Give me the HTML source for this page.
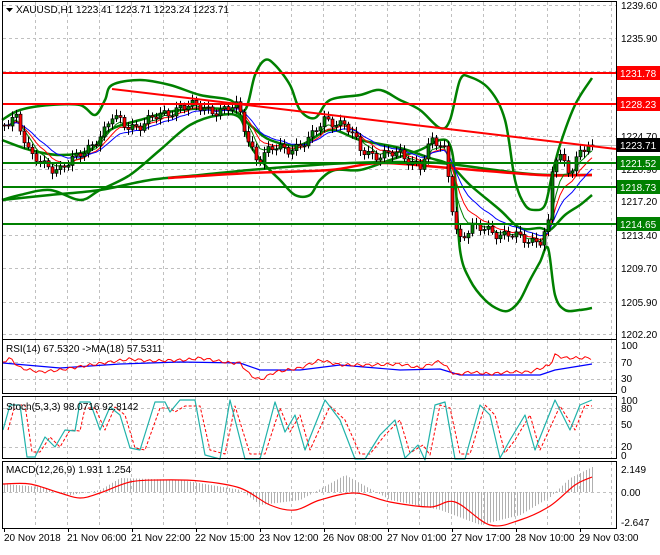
<!DOCTYPE html>
<html><head><meta charset="utf-8"><style>
html,body{margin:0;padding:0;background:#fff;}
body{width:660px;height:550px;overflow:hidden;font-family:"Liberation Sans",sans-serif;}
svg text{font-family:"Liberation Sans",sans-serif;font-size:10px;}
</style></head><body>
<svg id="s" width="660" height="550" xmlns="http://www.w3.org/2000/svg">
<rect width="660" height="550" fill="#fff"/>
<g id="grid" stroke="#c0c0c0" stroke-dasharray="3,3" stroke-width="1"></g>
<g id="ind"></g>
<g id="cand"></g>
<g id="top"></g>
<g fill="none" stroke="#000" stroke-width="1">
<rect x="2.5" y="1.5" width="614" height="338"/>
<rect x="2.5" y="339.5" width="614" height="54"/>
<rect x="2.5" y="396.5" width="614" height="62"/>
<rect x="2.5" y="461.5" width="614" height="67"/>
</g>
<g fill="#000">
<path d="M6 8 L13 8 L9.5 12 Z"/>
<text x="16" y="13">XAUUSD,H1  1223.41 1223.71 1223.24 1223.71</text>
<text x="6" y="352">RSI(14) 67.5320  -&gt;MA(18) 57.5311</text>
<text x="6" y="410">Stoch(5,3,3) 98.0716 92.8142</text>
<text x="6" y="473">MACD(12,26,9) 1.931 1.254</text>
</g>
<g fill="#000" id="axis">
<text x="621" y="9">1239.60</text>
<text x="621" y="42">1235.90</text>
<text x="621" y="140">1224.70</text>
<text x="621" y="173">1220.90</text>
<text x="621" y="205">1217.20</text>
<text x="621" y="239">1213.40</text>
<text x="621" y="272">1209.70</text>
<text x="621" y="306">1205.90</text>
<text x="621" y="338">1202.20</text>
<text x="621" y="349">100</text><text x="621" y="366">70</text><text x="621" y="382">30</text><text x="621" y="393">0</text>
<text x="621" y="404">100</text><text x="621" y="412">80</text><text x="621" y="428">50</text><text x="621" y="450">20</text><text x="621" y="459">0</text>
<text x="621" y="473">2.149</text><text x="621" y="496">0.00</text><text x="621" y="526">-2.647</text>
</g>
<g fill="#000" id="time">
<text x="4" y="541">20 Nov 2018</text>
<text x="67" y="541">21 Nov 06:00</text>
<text x="131" y="541">21 Nov 22:00</text>
<text x="195" y="541">22 Nov 15:00</text>
<text x="259" y="541">23 Nov 12:00</text>
<text x="323" y="541">26 Nov 08:00</text>
<text x="387" y="541">27 Nov 01:00</text>
<text x="451" y="541">27 Nov 17:00</text>
<text x="515" y="541">28 Nov 10:00</text>
<text x="579" y="541">29 Nov 03:00</text>
</g>
<g id="lbl"></g>
</svg>
<script>
var NS="http://www.w3.org/2000/svg";
function el(p,t,a){var e=document.createElementNS(NS,t);for(var k in a)e.setAttribute(k,a[k]);document.getElementById(p).appendChild(e);return e;}
function interp(pts,x){if(x<=pts[0][0])return pts[0][1];for(var i=1;i<pts.length;i++){if(x<=pts[i][0]){var a=pts[i-1],b=pts[i];return a[1]+(b[1]-a[1])*(x-a[0])/(b[0]-a[0]);}}return pts[pts.length-1][1];}
function pl(p,pts,c,w,d){var s=pts.map(function(q){return q[0]+","+q[1]}).join(" ");var a={points:s,fill:"none",stroke:c,"stroke-width":w,"stroke-linejoin":"round"};if(d)a["stroke-dasharray"]=d;el(p,"polyline",a);}
function cr(p,pts,c,w){var d="M"+pts[0][0]+","+pts[0][1];for(var i=0;i<pts.length-1;i++){var p0=pts[Math.max(0,i-1)],p1=pts[i],p2=pts[i+1],p3=pts[Math.min(pts.length-1,i+2)];
var c1x=p1[0]+(p2[0]-p0[0])/6,c1y=p1[1]+(p2[1]-p0[1])/6,c2x=p2[0]-(p3[0]-p1[0])/6,c2y=p2[1]-(p3[1]-p1[1])/6;
d+=" C"+c1x.toFixed(1)+","+c1y.toFixed(1)+" "+c2x.toFixed(1)+","+c2y.toFixed(1)+" "+p2[0]+","+p2[1];}
el(p,"path",{d:d,fill:"none",stroke:c,"stroke-width":w,"stroke-linejoin":"round"});}
function smooth(pts,step){var o=[];for(var x=pts[0][0];x<=pts[pts.length-1][0];x+=step)o.push([x,interp(pts,x)]);return o;}
var hy=[5,38,71,104,136,169,201,235,268,302,334];
hy.forEach(function(y){el("grid","line",{x1:3,x2:616,y1:y+.5,y2:y+.5});});
[362,379].forEach(function(y){el("grid","line",{x1:3,x2:616,y1:y+.5,y2:y+.5});});
[408,424,447].forEach(function(y){el("grid","line",{x1:3,x2:616,y1:y+.5,y2:y+.5});});
el("grid","line",{x1:3,x2:616,y1:492.5,y2:492.5});
for(var x=35;x<616;x+=32){[[2,339],[340,393],[397,458],[462,528]].forEach(function(r){el("grid","line",{x1:x+.5,x2:x+.5,y1:r[0],y2:r[1]});});}
el("grid","line",{x1:3,x2:616,y1:145.5,y2:145.5,stroke:"#c0c0c0","stroke-dasharray":"none"});
var P=[[4,125],[15,112],[30,158],[45,165],[60,168],[75,160],[90,145],[105,130],[112,118],[125,125],[140,125],[160,116],[180,106],[200,108],[220,110],[238,108],[248,140],[258,160],[270,150],[290,148],[310,140],[325,118],[345,125],[360,150],[380,155],[400,155],[420,165],[432,142],[445,150],[452,205],[458,240],[475,228],[490,228],[500,235],[520,238],[540,240],[548,226],[553,160],[560,158],[570,170],[580,150],[592,145]];
var closes=[],prev=125;
for(var i=0,x=4;x<=592;x+=4,i++){
 var c=interp(P,x)+Math.sin(i*1.7)*4+Math.sin(i*0.63)*3;
 if(x>=588)c=145;
 var o=prev;var hi=Math.min(o,c)-2-Math.abs(Math.sin(i*2.3))*4,lo=Math.max(o,c)+2+Math.abs(Math.cos(i*1.3))*4;
 el("cand","line",{x1:x+.5,x2:x+.5,y1:hi,y2:lo,stroke:"#000","stroke-width":1});
 var t=Math.min(o,c),h=Math.max(1,Math.abs(c-o));
 el("cand","rect",{x:x-1,y:t,width:3,height:h,fill:c<o?"#008000":"#ff0000",stroke:"#000","stroke-width":.7});
 closes.push([x,c]);prev=c;
}
function ema(n){var k=2/(n+1),v=closes[0][1],o=[];closes.forEach(function(q){v=v+k*(q[1]-v);o.push([q[0],v.toFixed(1)]);});return o;}
var UB=[[2,120],[20,110],[50,105],[80,105],[95,115],[105,100],[112,85],[140,80],[170,85],[200,95],[230,100],[245,110],[255,75],[265,60],[275,65],[290,85],[300,110],[315,118],[330,100],[360,95],[380,90],[400,100],[420,110],[440,128],[450,120],[460,80],[470,77],[490,90],[505,120],[515,180],[525,205],[535,210],[545,205],[552,175],[560,145],[575,105],[592,78]];
var LB=[[2,200],[20,195],[50,190],[80,200],[100,190],[130,175],[160,150],[190,125],[220,115],[240,118],[250,145],[265,165],[280,180],[295,195],[310,195],[320,180],[335,170],[360,170],[390,160],[420,150],[440,140],[450,145],[455,175],[460,250],[470,280],[485,300],[500,310],[510,310],[520,300],[530,280],[540,262],[548,248],[555,295],[565,310],[580,310],[592,308]];
var MB=[[2,140],[30,150],[60,155],[90,150],[110,130],[140,120],[180,110],[230,110],[250,125],[270,140],[300,145],[330,130],[360,140],[400,148],[430,158],[450,165],[470,185],[500,210],[520,228],[540,228],[550,230],[565,215],[580,205],[592,195]];
cr("ind",UB,"#008000",2.5);cr("ind",LB,"#008000",2.5);cr("ind",MB,"#008000",2.5);
cr("ind",[[2,200],[50,195],[100,190],[150,180],[200,175],[250,170],[300,166],[350,163],[400,162],[440,163],[480,168],[520,173],[550,175],[592,175]],"#008000",2.5);
cr("ind",[[168,178],[250,173],[330,170],[380,163],[450,168],[540,175],[592,175]],"#ff0000",2.5);
pl("ind",ema(5),"#008000",1);pl("ind",ema(8),"#ff0000",1);pl("ind",ema(13),"#0000ff",1);
el("top","line",{x1:3,x2:616,y1:73,y2:73,stroke:"#ff0000","stroke-width":2});
el("top","line",{x1:3,x2:616,y1:104,y2:104,stroke:"#ff0000","stroke-width":2});
el("top","line",{x1:112,x2:616,y1:89,y2:149,stroke:"#ff0000","stroke-width":2});
el("top","line",{x1:3,x2:616,y1:163,y2:163,stroke:"#008000","stroke-width":2});
el("top","line",{x1:3,x2:616,y1:187,y2:187,stroke:"#008000","stroke-width":2});
el("top","line",{x1:3,x2:616,y1:224,y2:224,stroke:"#008000","stroke-width":2});
function lab(y,t,bg){el("lbl","rect",{x:617,y:y-7,width:43,height:14,fill:bg});var e=el("lbl","text",{x:620,y:y+4,fill:"#fff"});e.textContent=t;}
lab(73,"1231.78","#ff0000");lab(104,"1228.23","#ff0000");lab(145,"1223.71","#000");
lab(163,"1221.52","#008000");lab(187,"1218.73","#008000");lab(224,"1214.65","#008000");
var R=[[3,362],[10,358],[20,368],[40,372],[60,370],[90,365],[110,362],[130,359],[150,361],[185,360],[200,358],[230,363],[240,363],[250,375],[260,380],[275,372],[300,368],[320,360],[340,365],[370,365],[400,364],[420,368],[440,361],[455,375],[470,372],[490,374],[510,372],[530,372],[550,365],[555,355],[565,358],[580,358],[592,358]];
var Rn=smooth(R,3).map(function(q,i){return [q[0],(q[1]+Math.sin(i*1.9)*1.5).toFixed(1)];});
pl("ind",[[3,363],[60,368],[120,364],[180,362],[240,363],[260,370],[300,370],[340,365],[400,370],[440,369],[460,375],[540,375],[555,370],[592,364]],"#0000ff",1.2);
pl("ind",Rn,"#ff0000",1);
var S=[[3,430],[10,405],[20,405],[27,457],[35,457],[45,437],[55,447],[65,430],[75,431],[80,402],[90,402],[100,430],[110,407],[120,415],[130,448],[140,450],[155,402],[165,402],[170,412],[180,400],[195,400],[205,455],[220,459],[230,400],[245,459],[260,459],[275,402],[285,432],[295,415],[305,450],[325,400],[340,420],[355,459],[365,459],[380,435],[395,420],[405,458],[418,445],[425,460],[435,405],[445,402],[455,459],[465,459],[480,405],[490,415],[500,458],[510,440],[525,415],[535,450],[555,400],[570,430],[580,405],[592,400]];
pl("ind",S.map(function(q){return [Math.min(q[0]+5,592),q[1]<405?q[1]+6:(q[1]>452?q[1]-5:q[1])]}),"#ff0000",1,"3,2");
pl("ind",S,"#20b2aa",1.2);
var H=[[3,484],[40,487],[70,495],[100,490],[120,478],[180,480],[240,490],[260,505],[300,500],[345,475],[390,500],[440,510],[480,525],[520,515],[550,497],[570,478],[592,467]];
for(var x=4;x<=592;x+=3){var v=interp(H,x);el("ind","line",{x1:x+.5,x2:x+.5,y1:492,y2:v,stroke:"#b0b0b0","stroke-width":1});}
cr("ind",[[3,484],[30,484],[60,493],[80,498],[100,493],[130,482],[160,480],[200,481],[240,488],[270,505],[295,510],[320,500],[355,493],[390,502],[430,507],[455,502],[490,525],[520,520],[550,506],[575,485],[592,477]],"#ff0000",1.2);
for(var x=4;x<616;x+=64)el("ind","line",{x1:x+.5,x2:x+.5,y1:528,y2:532,stroke:"#000"});
</script>
</body></html>
